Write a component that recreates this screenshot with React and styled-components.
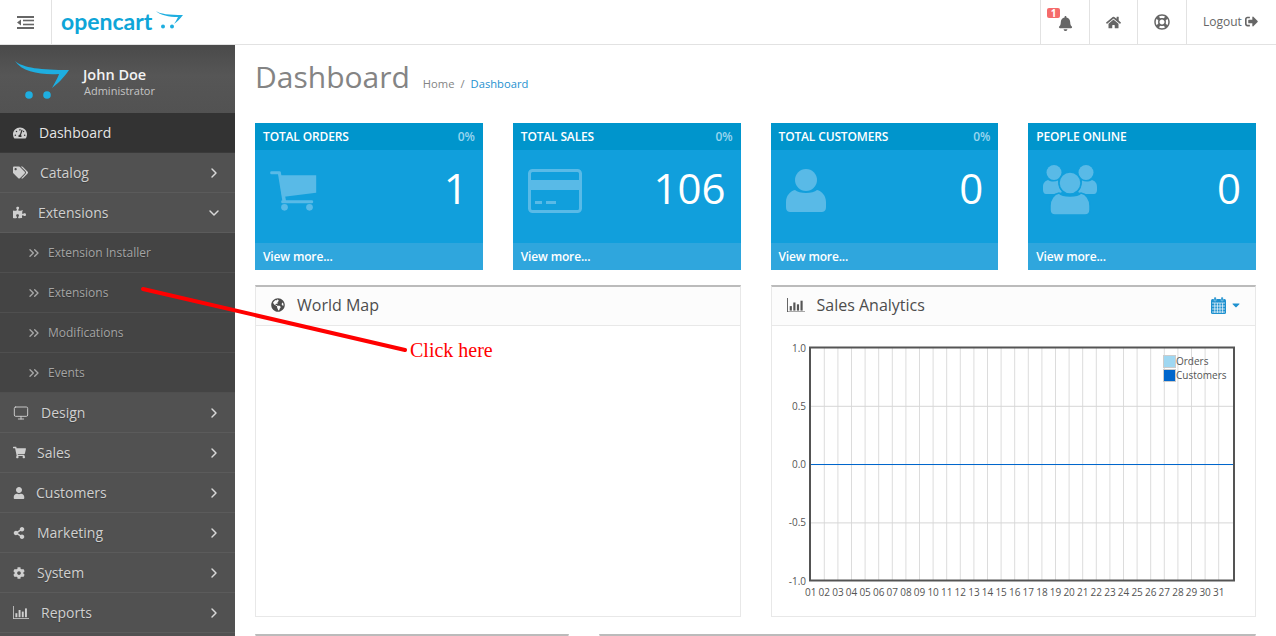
import styled, { createGlobalStyle } from "styled-components";
import {
  FaBell,
  FaCaretDown,
  FaCog,
  FaGlobeAmericas,
  FaHome,
  FaPuzzlePiece,
  FaRegLifeRing,
  FaShareAlt,
  FaShoppingCart,
  FaSignOutAlt,
  FaTachometerAlt,
  FaTags,
  FaUser,
} from "react-icons/fa";
import { ChevronDown, ChevronRight, ChevronsRight, Monitor } from "lucide-react";

const GlobalStyle = createGlobalStyle`
  html, body {
    margin: 0;
    height: 100%;
    overflow: hidden;
    background: #fff;
    font-family: "Open Sans", "Liberation Sans", sans-serif;
    font-size: 12px;
    color: #666;
  }
  * { box-sizing: border-box; }
`;

const Page = styled.div`
  position: relative;
  height: 100vh;
  display: flex;
  flex-direction: column;
  overflow: hidden;
`;

const Header = styled.header`
  flex: none;
  height: 45px;
  display: flex;
  align-items: stretch;
  border-bottom: 1px solid #e2e2e2;
`;

const MenuToggle = styled.div`
  width: 52px;
  display: flex;
  align-items: center;
  justify-content: center;
  padding-right: 1px;
  border-right: 1px solid #e2e2e2;
`;

const Logo = styled.div`
  display: flex;
  align-items: flex-start;
  padding: 6px 0 0 9px;
  flex: 1;
`;

const LogoText = styled.span`
  font-family: "Lato", "Open Sans", sans-serif;
  font-weight: 700;
  font-size: 23px;
  line-height: 30px;
  color: #0ea5d8;
`;

const HeaderCell = styled.div`
  position: relative;
  width: ${(p) => p.$w}px;
  display: flex;
  align-items: center;
  justify-content: ${(p) => (p.$wide ? "flex-start" : "center")};
  gap: 3px;
  padding-left: ${(p) => (p.$wide ? "16px" : "0")};
  padding-bottom: ${(p) => (p.$wide ? "2px" : "0")};
  border-left: 1px solid #e2e2e2;
  color: #666;
  font-size: 12px;
`;

const Badge = styled.span`
  position: absolute;
  left: 6px;
  top: 8px;
  width: 13px;
  height: 10px;
  border-radius: 2px;
  background: #f56b6b;
  color: #fff;
  font-size: 10px;
  font-weight: 700;
  line-height: 10px;
  text-align: center;
`;

const Body = styled.div`
  flex: 1;
  min-height: 0;
  display: flex;
`;

const Sidebar = styled.nav`
  flex: none;
  width: 235px;
  background: #515151;
`;

const Profile = styled.div`
  height: 68px;
  display: flex;
  align-items: center;
  padding: 0 0 0 15px;
  gap: 14px;
  background: linear-gradient(to bottom, #4a4a4a, #565656 45%, #525252);
`;

const ProfileLogo = styled.span`
  display: flex;
  margin-top: 2px;
`;

const ProfileText = styled.div`
  margin-top: 7px;
`;

const ProfileName = styled.div`
  color: #f2f2f2;
  font-size: 14.5px;
  font-weight: 600;
  line-height: 16px;
`;

const ProfileRole = styled.div`
  color: #c4c4c4;
  font-size: 11px;
  line-height: 14px;
  margin-left: 1px;
  padding-top: 1px;
`;

const MenuRow = styled.div`
  height: 40px;
  display: flex;
  align-items: center;
  padding: 0 13px 0 13px;
  border-bottom: 1px solid #5b5b5b;
  color: #d0d0d0;
  font-size: 14px;
  text-shadow: 0 1px 1px rgba(0, 0, 0, 0.25);
`;

const ActiveRow = styled(MenuRow)`
  background: #333;
  border-bottom-color: #3a3a3a;
  color: #e6e6e6;
`;

const SubRow = styled(MenuRow)`
  background: #444;
  border-bottom-color: #4f4f4f;
  color: #a4a4a4;
  font-size: 12px;
  padding-left: 26px;
`;

const MenuIcon = styled.span`
  flex: none;
  width: ${(p) => p.$w}px;
  display: flex;
  align-items: center;
  color: #cfcfcf;
`;

const SubIcon = styled(MenuIcon)`
  color: #a8a8a8;
`;

const Chevron = styled.span`
  margin-left: auto;
  display: flex;
  color: #d8d8d8;
`;

const Content = styled.main`
  flex: 1;
  min-width: 0;
  padding: 0 20px;
`;

const PageTitle = styled.div`
  height: 78px;
  display: flex;
  align-items: baseline;
  padding-top: 10px;
  gap: 13px;
`;

const TitleText = styled.h1`
  margin: 0;
  font-size: 30px;
  font-weight: 400;
  line-height: 44px;
  color: #848484;
`;

const Crumbs = styled.div`
  display: flex;
  gap: 6px;
  font-size: 11.2px;
  color: #848484;
`;

const CrumbLink = styled.span`
  color: #1e91cf;
`;

const TileGrid = styled.div`
  display: grid;
  grid-template-columns: repeat(4, minmax(0, 1fr));
  gap: 30px;
  margin-bottom: 15px;
`;

const Tile = styled.div`
  height: 147px;
  display: flex;
  flex-direction: column;
  background: #119fdc;
  color: #fff;
`;

const TileHead = styled.div`
  height: 27px;
  display: flex;
  align-items: center;
  justify-content: space-between;
  padding: 0 8px;
  background: #0095cc;
  font-size: 12px;
  font-weight: 600;
  letter-spacing: -0.15px;
`;

const TilePercent = styled.span`
  color: #99d5ef;
`;

const TileBody = styled.div`
  flex: 1;
  display: flex;
  align-items: flex-start;
  justify-content: space-between;
  padding: 8px 15px 0 15px;
`;

const TileIcon = styled.span`
  display: flex;
  color: #59bae7;
  margin-top: ${(p) => p.$top || 0}px;
`;

const TileValue = styled.span`
  font-size: 42px;
  line-height: 60px;
`;

const TileFoot = styled.div`
  height: 27px;
  display: flex;
  align-items: center;
  padding: 0 8px;
  background: #2fa6dd;
  font-size: 12px;
  font-weight: 600;
  letter-spacing: -0.15px;
`;

const PanelRow = styled.div`
  display: grid;
  grid-template-columns: ${(p) => p.$cols};
  gap: 30px;
  margin-bottom: 17px;
`;

const Panel = styled.section`
  height: ${(p) => p.$h}px;
  display: flex;
  flex-direction: column;
  border: 1px solid #e8e8e8;
  border-top: 2px solid #bbb;
`;

const PanelHead = styled.div`
  flex: none;
  height: 39px;
  display: flex;
  align-items: center;
  padding: 0 13px 2px 15px;
  gap: 12px;
  background: #fcfcfc;
  border-bottom: 1px solid #e8e8e8;
  color: #4d4d4d;
  font-size: 16px;
`;

const PanelTools = styled.span`
  margin-left: auto;
  display: flex;
  align-items: center;
  gap: 4px;
  color: #1e91cf;
  font-size: 12px;
`;

const Arrow = styled.svg`
  position: absolute;
  inset: 0;
  width: 100%;
  height: 100%;
  pointer-events: none;
`;

const ClickHere = styled.span`
  position: absolute;
  left: 410px;
  top: 338px;
  color: #f00;
  font-family: "Liberation Serif", serif;
  font-size: 20px;
  line-height: 24px;
`;

const CartMark = () => (
  <svg width="54" height="38" viewBox="0 0 54 38">
    <path d="M0 0C8 7 26 9 54 9C48 18 42 23 37 27C41 20 43 16 44 13C26 14 7 11 0 0Z" fill="#1eaee0" />
    <circle cx="14" cy="34" r="3.8" fill="#1eaee0" />
    <circle cx="32" cy="34" r="3.8" fill="#1eaee0" />
  </svg>
);

const HeaderCart = () => (
  <svg width="28" height="24" viewBox="0 0 28 24" style={{ marginTop: 5, marginLeft: 3 }}>
    <path d="M1 0C5 3 14 4 28 4C25 8 22 11 19 13C21 10 22 8 23 6C14 6 5 4 1 0Z" fill="#1eaee0" />
    <circle cx="8" cy="15.5" r="2" fill="#1eaee0" />
    <circle cx="17" cy="15.5" r="2" fill="#1eaee0" />
  </svg>
);

const Dedent = () => (
  <svg width="17" height="13" viewBox="0 0 17 13" fill="#666">
    <rect width="17" height="2" />
    <rect x="6" y="3.7" width="11" height="1.6" />
    <rect x="6" y="7.7" width="11" height="1.6" />
    <rect y="11" width="17" height="2" />
    <path d="M4 3.5V9.5L0 6.5Z" />
  </svg>
);

const BarChartIcon = ({ size = 16, color = "#cfcfcf" }) => (
  <svg width={size} height={size * 0.8} viewBox="0 0 20 16" fill={color}>
    <rect y="0" width="1" height="16" />
    <rect y="15" width="20" height="1" />
    <rect x="3" y="9" width="2.4" height="5" />
    <rect x="7" y="5" width="2.4" height="9" />
    <rect x="11" y="7" width="2.4" height="7" />
    <rect x="15" y="3" width="2.4" height="11" />
  </svg>
);

const CalendarIcon = () => (
  <svg width="15" height="17" viewBox="0 0 15 17">
    <rect y="2" width="15" height="15" rx="1.5" fill="#1e91cf" />
    <rect x="3" y="0" width="2.2" height="4" rx="1" fill="#1e91cf" stroke="#fff" strokeWidth=".4" />
    <rect x="10" y="0" width="2.2" height="4" rx="1" fill="#1e91cf" stroke="#fff" strokeWidth=".4" />
    <path d="M1 6H14M1 9H14M1 12H14M1 15H14M3.8 6V16M6.4 6V16M9 6V16M11.6 6V16" stroke="#fff" strokeWidth=".7" fill="none" />
  </svg>
);

const TileCart = () => (
  <svg width="47" height="40" viewBox="60 170 140 120" fill="currentColor">
    <rect x="60" y="171" width="32" height="9" rx="4" />
    <path d="M83 176L92 174L108 262H97Z" />
    <path d="M86 183H198V235L96 248Z" />
    <rect x="93" y="258" width="96" height="9" rx="4" />
    <circle cx="103" cy="279" r="10" />
    <circle cx="178" cy="279" r="10" />
  </svg>
);

const CardIcon = () => (
  <svg width="54" height="44" viewBox="0 0 54 44">
    <rect x="1.5" y="1.5" width="51" height="41" rx="3" fill="none" stroke="currentColor" strokeWidth="3" />
    <rect x="2" y="11" width="50" height="10" fill="currentColor" />
    <rect x="7" y="32" width="7" height="3" fill="currentColor" />
    <rect x="18" y="32" width="10" height="3" fill="currentColor" />
  </svg>
);

const PersonIcon = () => (
  <svg width="40" height="44" viewBox="0 0 40 44" fill="currentColor">
    <circle cx="20" cy="11" r="11" />
    <path d="M9 21C13 25 27 25 31 21C36 22 40 27 40 33V38C40 42 38 43 35 43H5C2 43 0 42 0 38V33C0 27 4 22 9 21Z" />
  </svg>
);

const PeopleIcon = () => (
  <svg width="54" height="50" viewBox="0 0 54 50" fill="currentColor">
    <circle cx="11" cy="7.5" r="7.5" />
    <circle cx="43" cy="7.5" r="7.5" />
    <path d="M5 15C8 17 12 17 15 15.5C15 20 17 24 19 27C14 29 12 29 3 29C1 29 0 27 0 25V22C0 18 2 16 5 15Z" />
    <path d="M49 15C46 17 42 17 39 15.5C39 20 37 24 35 27C40 29 42 29 51 29C53 29 54 27 54 25V22C54 18 52 16 49 15Z" />
    <circle cx="27" cy="18" r="11" stroke="#119fdc" strokeWidth="1.5" />
    <path d="M16 28C20 32 34 32 38 28C43 29 47 34 47 41V45C47 48 45 50 42 50H12C9 50 7 48 7 45V41C7 34 11 29 16 28Z" stroke="#119fdc" strokeWidth="1.5" />
  </svg>
);

const menuAfter = [
  { label: "Design", w: 28, icon: <Monitor size={16} strokeWidth={1.4} /> },
  { label: "Sales", w: 24, icon: <FaShoppingCart size={13} /> },
  { label: "Customers", w: 23, icon: <FaUser size={12} /> },
  { label: "Marketing", w: 24, icon: <FaShareAlt size={12} /> },
  { label: "System", w: 24, icon: <FaCog size={12} /> },
  { label: "Reports", w: 28, icon: <BarChartIcon /> },
];

const subMenu = ["Extension Installer", "Extensions", "Modifications", "Events"];

const tiles = [
  { title: "TOTAL ORDERS", percent: "0%", value: "1", top: 13, icon: <TileCart /> },
  { title: "TOTAL SALES", percent: "0%", value: "106", top: 11, icon: <CardIcon /> },
  { title: "TOTAL CUSTOMERS", percent: "0%", value: "0", top: 11, icon: <PersonIcon /> },
  { title: "PEOPLE ONLINE", percent: "", value: "0", top: 7, icon: <PeopleIcon /> },
];

const days = Array.from({ length: 31 }, (_, i) => String(i + 1).padStart(2, "0"));
const yTicks = ["1.0", "0.5", "0.0", "-0.5", "-1.0"];

// chart is drawn in panel coordinates, plot box runs 38..462 x 21..254
const SalesChart = () => (
  <svg width="483" height="290" viewBox="0 0 483 290" fontFamily="Open Sans, sans-serif" fontSize="10" fill="#545454">
    {days.map((d, i) => {
      const x = 38.7 + i * 13.6;
      return (
        <g key={d}>
          {i > 0 && <line x1={x} x2={x} y1="21" y2="255" stroke="#dcdcdc" />}
          <text x={x} y="270" textAnchor="middle">{d}</text>
        </g>
      );
    })}
    {yTicks.map((t, i) => {
      const y = 22 + i * 58.3;
      return (
        <g key={t}>
          {i > 0 && i < 4 && <line x1="38" x2="462" y1={y} y2={y} stroke="#d6d6d6" />}
          <text x="34" y={y + 3.5} textAnchor="end">{t}</text>
        </g>
      );
    })}
    <line x1="38" x2="462" y1="138.5" y2="138.5" stroke="#0066cc" />
    <rect x="38" y="21.5" width="424" height="233" fill="none" stroke="#545454" strokeWidth="2" />
    <rect x="391.5" y="29.5" width="12" height="12" fill="#9fd7f1" stroke="#ccc" />
    <rect x="391.5" y="43.5" width="12" height="12" fill="#0066cc" stroke="#ccc" />
    <text x="404" y="39">Orders</text>
    <text x="404" y="53">Customers</text>
  </svg>
);

const App = () => (
  <Page>
    <GlobalStyle />
    <Header>
      <MenuToggle>
        <Dedent />
      </MenuToggle>
      <Logo>
        <LogoText>opencart</LogoText>
        <HeaderCart />
      </Logo>
      <HeaderCell $w={49}>
        <Badge>1</Badge>
        <FaBell size={15} style={{ marginTop: 2 }} />
      </HeaderCell>
      <HeaderCell $w={48}>
        <FaHome size={15} />
      </HeaderCell>
      <HeaderCell $w={49}>
        <FaRegLifeRing size={16} />
      </HeaderCell>
      <HeaderCell $w={90} $wide>
        Logout <FaSignOutAlt size={13} />
      </HeaderCell>
    </Header>
    <Body>
      <Sidebar>
        <Profile>
          <ProfileLogo><CartMark /></ProfileLogo>
          <ProfileText>
            <ProfileName>John Doe</ProfileName>
            <ProfileRole>Administrator</ProfileRole>
          </ProfileText>
        </Profile>
        <ActiveRow>
          <MenuIcon $w={26}><FaTachometerAlt size={14} /></MenuIcon>
          Dashboard
        </ActiveRow>
        <MenuRow>
          <MenuIcon $w={27}><FaTags size={15} /></MenuIcon>
          Catalog
          <Chevron><ChevronRight size={16} strokeWidth={2.2} /></Chevron>
        </MenuRow>
        <MenuRow>
          <MenuIcon $w={25}><FaPuzzlePiece size={13} /></MenuIcon>
          Extensions
          <Chevron><ChevronDown size={16} strokeWidth={2.2} /></Chevron>
        </MenuRow>
        {subMenu.map((s) => (
          <SubRow key={s}>
            <SubIcon $w={22}><ChevronsRight size={16} strokeWidth={2} /></SubIcon>
            {s}
          </SubRow>
        ))}
        {menuAfter.map((m) => (
          <MenuRow key={m.label}>
            <MenuIcon $w={m.w}>{m.icon}</MenuIcon>
            {m.label}
            <Chevron><ChevronRight size={16} strokeWidth={2.2} /></Chevron>
          </MenuRow>
        ))}
      </Sidebar>
      <Content>
        <PageTitle>
          <TitleText>Dashboard</TitleText>
          <Crumbs>
            <span>Home</span>
            <span>/</span>
            <CrumbLink>Dashboard</CrumbLink>
          </Crumbs>
        </PageTitle>
        <TileGrid>
          {tiles.map((t) => (
            <Tile key={t.title}>
              <TileHead>
                {t.title}
                <TilePercent>{t.percent}</TilePercent>
              </TileHead>
              <TileBody>
                <TileIcon $top={t.top}>{t.icon}</TileIcon>
                <TileValue>{t.value}</TileValue>
              </TileBody>
              <TileFoot>View more...</TileFoot>
            </Tile>
          ))}
        </TileGrid>
        <PanelRow $cols="repeat(2, minmax(0, 1fr))">
          <Panel $h={332}>
            <PanelHead>
              <FaGlobeAmericas size={14} />
              World Map
            </PanelHead>
          </Panel>
          <Panel $h={332}>
            <PanelHead>
              <BarChartIcon size={18} color="#555" />
              Sales Analytics
              <PanelTools>
                <CalendarIcon />
                <FaCaretDown size={12} />
              </PanelTools>
            </PanelHead>
            <SalesChart />
          </Panel>
        </PanelRow>
        <PanelRow $cols="minmax(0, 313.67fr) minmax(0, 657.33fr)">
          <Panel $h={40} />
          <Panel $h={40} />
        </PanelRow>
      </Content>
    </Body>
    <Arrow>
      <line x1="143" y1="289" x2="405" y2="350" stroke="#f00" strokeWidth="4" strokeLinecap="round" />
    </Arrow>
    <ClickHere>Click here</ClickHere>
  </Page>
);

export default App;
